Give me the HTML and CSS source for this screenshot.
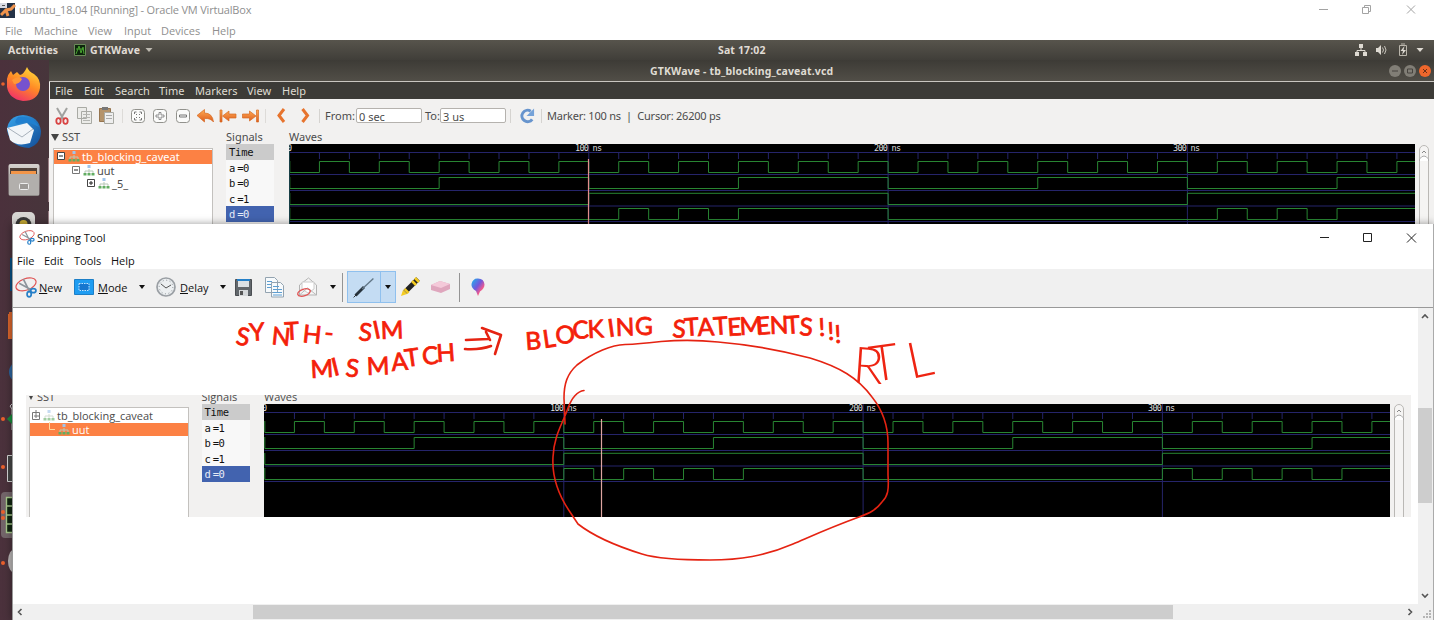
FILE: index.html
```html
<!DOCTYPE html>
<html lang="en">
<head>
<meta charset="utf-8">
<title>ubuntu_18.04 [Running] - Oracle VM VirtualBox</title>
<link rel="stylesheet" href="styles.css">
</head>
<body>
<svg class="defs" width="0" height="0">
  <defs>
    <linearGradient id="org" x1="0" y1="0" x2="0" y2="1"><stop offset="0" stop-color="#ffad55"/><stop offset="1" stop-color="#dd5a1c"/></linearGradient>
    <linearGradient id="fox" x1=".8" y1="0" x2=".3" y2="1"><stop offset="0" stop-color="#ffdd3c"/><stop offset=".5" stop-color="#ff8a25"/><stop offset="1" stop-color="#f0306a"/></linearGradient>
    <linearGradient id="bird" x1="0" y1="0" x2="1" y2="1"><stop offset="0" stop-color="#38a5ec"/><stop offset="1" stop-color="#124c96"/></linearGradient>
    <linearGradient id="drawer" x1="0" y1="0" x2="0" y2="1"><stop offset="0" stop-color="#d6d3cf"/><stop offset="1" stop-color="#8d8a87"/></linearGradient>
    <linearGradient id="pin" x1="0" y1="0" x2="1" y2="1"><stop offset="0" stop-color="#17b9ef"/><stop offset=".45" stop-color="#7357dc"/><stop offset=".7" stop-color="#ef5a8e"/><stop offset="1" stop-color="#ff9b35"/></linearGradient>
    <g id="grid" fill="none" stroke="#25246a">
      <path d="M0 8.500H38M0 30.500H38M0 46.500H38M0 62H38M0 77.500H38" vector-effect="non-scaling-stroke"/>
      <path d="M1 9v6M2 9v6M3 9v6M4 9v6M5 9v6M6 9v6M7 9v6M8 9v6M9 9v6M11 9v6M12 9v6M13 9v6M14 9v6M15 9v6M16 9v6M17 9v6M18 9v6M19 9v6M21 9v6M22 9v6M23 9v6M24 9v6M25 9v6M26 9v6M27 9v6M28 9v6M29 9v6M31 9v6M32 9v6M33 9v6M34 9v6M35 9v6M36 9v6M37 9v6M10 0V113M20 0V113M30 0V113" vector-effect="non-scaling-stroke"/>
    </g>
    <g id="abc" fill="none" stroke="#288532">
      <path d="M.01 17V28.500H1V17.500H2V28.500H3V17.500H4V28.500H5V17.500H6V28.500H7V17.500H8V28.500H9V17.500H10V28.500H11V17.500H12V28.500H13V17.500H14V28.500H15V17.500H16V28.500H17V17.500H18V28.500H19V17.500H20V28.500H21V17.500H22V28.500H23V17.500H24V28.500H25V17.500H26V28.500H27V17.500H28V28.500H29V17.500H30V28.500H31V17.500H32V28.500H33V17.500H34V28.500H35V17.500H36V28.500H37V17.500H38" vector-effect="non-scaling-stroke"/>
      <path d="M.01 33V44.500H5V33.500H10V44.500H15V33.500H20V44.500H25V33.500H30V44.500H35V33.500H38" vector-effect="non-scaling-stroke"/>
      <path d="M.01 49V60.500H10V49.300H20V60.500H30V49.300H38" vector-effect="non-scaling-stroke"/>
    </g>
    <symbol id="tree" viewBox="0 0 12 11"><path d="M6 4v2M2 8V6h8v2M6 6v2" fill="none" stroke="#b7c8b7"/><rect x="4.500" y="0" width="3" height="3" fill="#9fc4ea"/><path d="M.5 8h3v2.500h-3zM4.500 8h3v2.500h-3zM8.500 8h3v2.500h-3z" fill="#62ad62"/></symbol>
    <symbol id="snip" viewBox="0 0 21 20"><ellipse cx="10.500" cy="7" rx="10" ry="5.500" transform="rotate(-20 10.500 7)" fill="none" stroke="#e05252" stroke-width="1.100"/><path d="M4 6l11 6M8 2l6 12" stroke="#8c949b" stroke-width="1.600"/><ellipse cx="13.500" cy="16.500" rx="2" ry="2.500" fill="none" stroke="#257fc8" stroke-width="1.600"/><ellipse cx="17.500" cy="13" rx="2.500" ry="1.900" fill="none" stroke="#257fc8" stroke-width="1.600"/></symbol>
  </defs>
</svg>

<main class="desktop">
  <section class="vm">
    <header class="vm-title">
      <svg width="16" height="17" viewBox="0 0 16 17"><path d="M0 1h15v15H0z" fill="#243247"/><path d="M1 13l5-5 5-1 4-4M6 8l2 6" stroke="#f0944d" stroke-width="3" fill="none"/><path d="M0 1h7v5H0z" fill="#d8dbe4"/><path d="M2 3.500h3" stroke="#555"/></svg>
      <span class="vm-name">ubuntu_18.04 [Running] - Oracle VM VirtualBox</span>
      <svg class="winbtns" width="110" height="20" viewBox="0 0 110 20" fill="none" stroke="#a3a3a3"><path d="M9 9.500h9M52.500 7.500h6v6h-6zM54.500 7v-1.500h6v6H59M97 5.500l8 8M105 5.500l-8 8"/></svg>
    </header>
    <nav class="vm-menu"><span>File</span><span>Machine</span><span>View</span><span>Input</span><span>Devices</span><span>Help</span></nav>
    <div class="gnome">
      <b class="activities">Activities</b>
      <svg width="12" height="12" viewBox="0 0 12 12"><path d="M.5.5h11v11H.5z" fill="#0e260d" stroke="#6a8b58"/><path d="M2 10L5 2l2 7 2-6 1 7M2 5h8" stroke="#48a32f" fill="none"/></svg>
      <b class="appname">GTKWave</b>
      <svg width="8" height="5"><path d="M.5 0h7L4 4z" fill="#bdb9b0"/></svg>
      <b class="clock">Sat 17:02</b>
      <svg class="tray" width="74" height="14" viewBox="0 0 74 14" fill="#dedad2"><path d="M5 1h4v4H5zM1 9h4v4H1zM9 9h4v4H9z"/><path d="M7 5v2.500M3 9V7.500h8V9" fill="none" stroke="#dedad2"/><path d="M22 5h2l3-3v10l-3-3h-2z"/><path d="M28.500 4.500q2 2.500 0 5M30.500 3q3 4 0 8" fill="none" stroke="#c9c5bd"/><path d="M45.500 2.500h7v10h-7zM47 1h4" fill="none" stroke="#bab6ac"/><path d="M50.500 3l-4 5h2.500l-1 4 4-5h-2.500z"/><path d="M62.500 5h7L66 9z"/></svg>
    </div>
    <div class="guest">
      <aside class="dock">
        <svg width="49" height="560" viewBox="0 60 49 560">
          <circle cx="3" cy="84" r="1.800" fill="#e9602c"/>
          <path d="M7 79q1-5 4-8l2 4 4-3 3 3q4-1 7-8 2 5 7 7 7 5 6 14-2 13-17 13Q9 99 7 87z" fill="url(#fox)"/>
          <circle cx="23" cy="84" r="7" fill="#7652cf"/><path d="M12 80q6-5 10-1-2 5-8 5z" fill="#ff9837"/>
          <path d="M7 130Q8 116 23 115q16 1 18 16 0 13-12 17Q10 147 7 130z" fill="url(#bird)"/><path d="M7 128l20-5 7 7-4 13q-13 4-20-3z" fill="#f2f5f8"/><path d="M8 128l14 9 11-8" stroke="#a8b1bb" fill="none"/><path d="M18 117q15-2 21 10-8-4-12-5l-10 2q-4-2 1-7z" fill="#2080d0"/>
          <rect x="8.500" y="164" width="31" height="32" rx="2" fill="url(#drawer)"/><path d="M10 168h27v8H10z" fill="#50423a"/><path d="M11 171h25v3H11z" fill="#f29548"/><path d="M9 174h30v21H9z" fill="#b2afac"/><rect x="19.500" y="183.500" width="9" height="6" rx="1" fill="#9c9996" stroke="#eee"/>
          <path d="M48.500 158v44M48.500 211v13" stroke="#9a8086"/>
          <rect x="12" y="212" width="23" height="28" rx="5" fill="#d7d6d3"/><circle cx="23.500" cy="225" r="8" fill="#393939"/><circle cx="23.500" cy="224" r="4" fill="#c9ad36"/>
          <path d="M10 258h8v33h-8z" fill="#075083"/><path d="M8 314h8v25H8zM9 312h3v2H9z" fill="#d9652c"/><circle cx="20" cy="372" r="11" fill="#2c659f"/>
          <path d="M12 404l-2 2 2 3v21" stroke="#ccc" fill="none"/><path d="M7 419l6-6v12z" fill="#168d3b"/>
          <path d="M7.500 455.500h8v26h-8z" fill="#444" stroke="#d3d3d3"/>
          <rect x="1" y="492" width="20" height="46" rx="4" fill="#73656a"/><path d="M6.500 497.500h8v35h-8zM7 506h6M7 515h6M7 524h6" fill="#112511" stroke="#a7c98b" stroke-width="1.400"/>
          <ellipse cx="15" cy="561" rx="7" ry="12" fill="#bbb7b7"/>
          <g fill="#e9602c"><circle cx="3" cy="419" r="2"/><circle cx="3" cy="467" r="2"/><circle cx="3" cy="512" r="2"/><circle cx="3" cy="518" r="2"/><circle cx="3" cy="563" r="2"/></g>
        </svg>
      </aside>
      <div class="gtk">
        <div class="gtk-title"><b>GTKWave - tb_blocking_caveat.vcd</b>
          <svg class="gtkbtns" width="46" height="14" viewBox="0 0 46 14"><circle cx="7" cy="7" r="6" fill="#817e76"/><path d="M4 7h6" stroke="#46433e"/><circle cx="22" cy="7" r="6" fill="#817e76"/><path d="M19.500 5h5v4h-5z" fill="none" stroke="#46433e"/><circle cx="37" cy="7" r="6" fill="#ef672c"/><path d="M35 5l4 4M39 5l-4 4" stroke="#6b2f18"/></svg>
        </div>
        <nav class="gtk-menu"><span>File</span><span>Edit</span><span>Search</span><span>Time</span><span>Markers</span><span>View</span><span>Help</span></nav>
        <div class="gtk-tools">
          <svg width="270" height="22" viewBox="49 105 270 22">
            <path d="M57 108l7 12M67 108l-7 12" stroke="#a0a19f" stroke-width="2"/><ellipse cx="58.500" cy="121" rx="2.200" ry="2.800" fill="none" stroke="#d84343" stroke-width="1.800"/><ellipse cx="65.500" cy="121" rx="2.200" ry="2.800" fill="none" stroke="#d84343" stroke-width="1.800"/>
            <path d="M77.500 107.500h9v11h-9zM81.500 111.500h10v12h-10z" fill="#ecece9" stroke="#a9aaa4"/><path d="M83 114.500h7M83 117.500h7M83 120.500h7" stroke="#b5b6b2"/>
            <path d="M99.500 108.500h11v13h-11z" fill="#b4936b" stroke="#96754f"/><path d="M102 107h6v3h-6z" fill="#777"/><path d="M104.500 112.500h9v11h-9z" fill="#eee" stroke="#a9aaa4"/><path d="M106 115.500h6M106 118.500h6" stroke="#aaa"/>
            <path d="M122.500 109v14M265.500 109v14" stroke="#dddbd8"/>
            <g fill="#fbfbfa" stroke="#92928d"><rect x="131.500" y="109.500" width="13" height="13" rx="3"/><rect x="153.500" y="109.500" width="13" height="13" rx="3"/><rect x="176.500" y="109.500" width="13" height="13" rx="3"/></g>
            <path d="M134.500 114v-2h2M141.500 114v-2h-2M134.500 118v2h2M141.500 118v2h-2M136 114l1 1M140 114l-1 1M136 118l1-1M140 118l-1-1" fill="none" stroke="#777"/><path d="M159 112.500h2v2.500h3v2h-3v2.500h-2V117h-3v-2h3z" fill="none" stroke="#777" stroke-width=".8"/><path d="M179.500 115h7v2h-7z" fill="none" stroke="#777"/>
            <g fill="url(#org)" stroke="#d66a24" stroke-width=".7"><path d="M197 115.500l7.500-6v3.500q8 0 9 9-3-4-9-3.500v3.500z"/><path d="M220 110h2v12h-2zM222.500 116l6.500-5v3h7v4h-7v3z"/><path d="M256.500 110h2v12h-2zM256 116l-6.500-5v3h-7v4h7v3z"/></g>
            <path d="M284 109l-5 6.500 5 6.500M302.500 109l5 6.500-5 6.500" fill="none" stroke="#e7742e" stroke-width="3"/>
          </svg>
          <span class="sep s1"></span>
          <label>From:</label><span class="field">0 sec</span><label class="to">To:</label><span class="field">3 us</span>
          <span class="sep s2"></span>
          <svg class="reload" width="16" height="18" viewBox="0 0 17 18"><path d="M14 12.500A6 6 0 1 1 12.500 4" fill="none" stroke="#6794cd" stroke-width="3.200"/><path d="M16 1v8H8z" fill="#75a2d8"/></svg>
          <span class="sep"></span>
          <span class="marker">Marker: 100 ns&nbsp; |&nbsp; Cursor: 26200 ps</span>
        </div>
        <div class="panes">
          <div class="sst"><div class="pane-label"><i class="tri"></i>SST</div>
            <div class="treebox">
              <div class="node sel"><svg width="9" height="9"><path d="M.5.500h7v7h-7z" fill="#fff" stroke="#444"/><path d="M2 4h4" stroke="#222"/></svg><svg width="12" height="11"><use href="#tree"/></svg><span>tb_blocking_caveat</span></div>
              <div class="node n2"><svg width="9" height="9"><path d="M.5.500h7v7h-7z" fill="#fff" stroke="#777"/><path d="M2 4h4" stroke="#222"/></svg><svg width="12" height="11"><use href="#tree"/></svg><span>uut</span></div>
              <div class="node n3"><svg width="9" height="9"><path d="M.5.500h7v7h-7z" fill="#fff" stroke="#444"/><path d="M2 4h4M4 2v4" stroke="#222"/></svg><svg width="12" height="11"><use href="#tree"/></svg><span>_5_</span></div>
            </div>
          </div>
          <div class="signals"><div class="pane-label">Signals</div>
            <div class="sigs"><span class="time">Time</span><span>a =0</span><span>b =0</span><span>c =1</span><span class="on">d =0</span></div>
          </div>
          <div class="waves"><div class="pane-label">Waves</div>
            <svg class="scope" width="1126" height="113">
              <g transform="translate(.5 0) scale(29.93 1)"><use href="#grid"/><use href="#abc"/><path d="M.01 64V75.500H11V64.500H12V75.500H13V64.500H14V75.500H15V64.500H20V75.500H31V64.500H32V75.500H33V64.500H34V75.500H35V64.500H38" class="trace"/></g>
              <path d="M.5 0v113" stroke="#173e45"/><path d="M299.500 15v98" stroke="#e38d8b" stroke-width="1.200"/>
              <text x="-2" y="7">0</text><text x="286" y="7" textLength="27">100 ns</text><text x="585" y="7" textLength="27">200 ns</text><text x="884" y="7" textLength="27">300 ns</text>
            </svg>
          </div>
          <svg class="gscroll" width="14" height="130" viewBox="0 0 14 130"><rect x="4.500" y=".5" width="9" height="140" rx="4.500" fill="#f5f4f3" stroke="#bab8b5"/><path d="M4.500 16v-2q4.500-6 9 0v2" fill="#fff" stroke="#aaa"/><path d="M7 8l2-2 2 2" fill="none" stroke="#888"/></svg>
        </div>
      </div>
    </div>
  </section>

  <section class="snipping">
    <header class="s-title"><svg width="16" height="15"><use href="#snip"/></svg><span>Snipping Tool</span>
      <svg class="winbtns" width="110" height="25" viewBox="0 0 110 25" fill="none" stroke="#222"><path d="M10 13.500h9M53.500 9.500h8v8h-8zM97 9.500l9 9M106 9.500l-9 9"/></svg>
    </header>
    <nav class="s-menu"><span>File</span><span>Edit</span><span>Tools</span><span>Help</span></nav>
    <div class="s-tools">
      <svg width="22" height="21"><use href="#snip"/></svg><span><u>N</u>ew</span>
      <svg width="20" height="16"><path d="M.5.500h19v15H.5z" fill="#1f9df2" stroke="#1c7fc7"/><path d="M5 4.500h10v7H5z" fill="#1677cf" stroke="#bfe4ff" stroke-dasharray="1.500 1"/></svg><span><u>M</u>ode</span>
      <i class="caret"></i>
      <svg width="20" height="20" viewBox="0 0 20 20"><circle cx="10" cy="10" r="9" fill="#eceff1" stroke="#9a9fa4" stroke-width="1.700"/><circle cx="10" cy="10" r="6.800" fill="none" stroke="#868d92" stroke-dasharray="1 2.560"/><path d="M5 7l5 4 5-3" fill="none" stroke="#555"/></svg><span><u>D</u>elay</span>
      <i class="caret"></i>
      <svg width="18" height="17"><path d="M.5.500h16v16h-16z" fill="#62676c" stroke="#4a4e52"/><path d="M3 0h11v8H3z" fill="#dce1e5"/><path d="M2 0h13v2H2z" fill="#2580c8"/><path d="M4 11h9v6H4z" fill="#d5d8da"/><path d="M5 12h3v4H5z" fill="#555"/></svg>
      <svg width="20" height="21" viewBox="0 0 20 21"><path d="M.5.500h9l3 3v12H.5zM6.500 5.500h9l3 3v11.500h-12z" fill="#f7fafc" stroke="#93a3b0"/><path d="M2 4.500h5M2 7.500h4M2 10.500h4M8 9.500h6M8 12.500h9M8 15.500h9M8 18h9" stroke="#5d9ed2"/></svg>
      <svg width="22" height="20" viewBox="0 0 22 20"><path d="M2.500 8l9-7 8 7v10h-17z" fill="#f5f5f5" stroke="#b3b3b3"/><path d="M5 5h12v7l-6 4-6-4z" fill="#fff" stroke="#ccc"/><path d="M2.500 18l8-7 9 7" fill="none" stroke="#bbb"/><ellipse cx="7" cy="15.500" rx="6.500" ry="3.400" transform="rotate(-18 7 15.500)" fill="none" stroke="#e05555" stroke-width="1.300"/></svg>
      <i class="caret"></i><i class="rule"></i>
      <div class="pen"><svg width="33" height="31" viewBox="0 0 34 31"><path d="M8 24l9-9" stroke="#27333d" stroke-width="3"/><path d="M15 17L27 6" stroke="#627787" stroke-width="1.500"/><path d="M6 26l3-3" stroke="#222"/></svg><i class="caret"></i></div>
      <svg width="20" height="20" viewBox="0 0 20 20"><path d="M5 15L18 2" stroke="#222" stroke-width="5"/><path d="M1 19l2-6 4 4z" fill="#f5cc22"/><path d="M4.500 12l4 4M12 4l4 4M15 1l4 4" stroke="#f2c920" stroke-width="2.500"/></svg>
      <svg width="21" height="14" viewBox="0 0 21 14"><path d="M1 5l9-4 10 3v5l-9 4-10-3z" fill="#dfa6bd"/><path d="M1 5l9-4 10 3-9 4z" fill="#f4c9d9"/></svg>
      <i class="rule"></i>
      <svg width="14" height="19" viewBox="0 0 14 19"><path d="M7 18l-2-5Q0 10 .5 6 2 0 7 .500q6 0 6.500 6 0 4-4.500 7z" fill="url(#pin)"/></svg>
    </div>
    <div class="s-body">
      <div class="canvas">
        <div class="capture">
          <div class="sst"><div class="pane-label"><i class="tri"></i>SST</div>
            <div class="treebox">
              <div class="node"><svg width="9" height="11"><path d="M.5 2.500h7v7h-7z" fill="#fff" stroke="#777"/><path d="M2 6h6M4 0v8" stroke="#777"/></svg><svg width="12" height="11" opacity=".6"><use href="#tree"/></svg><span>tb_blocking_caveat</span></div>
              <div class="node sel n2"><svg width="9" height="14"><path d="M2.500 0v7.500H8" fill="none" stroke="#ffd9a0"/></svg><svg width="12" height="11"><use href="#tree"/></svg><span>uut</span></div>
            </div>
          </div>
          <div class="signals"><div class="pane-label">Signals</div>
            <div class="sigs"><span class="time">Time</span><span>a =1</span><span>b =0</span><span>c =1</span><span class="on">d =0</span></div>
          </div>
          <div class="waves"><div class="pane-label">Waves</div>
            <svg class="scope" width="1126" height="113">
              <g transform="translate(.5 0) scale(29.93 1)"><use href="#grid"/><use href="#abc"/><path d="M.01 64V75.500H10V64.500H11V75.500H12V64.500H13V75.500H14V64.500H15V75.500H16V64.500H20V75.500H30V64.500H31V75.500H32V64.500H33V75.500H34V64.500H35V75.500H36V64.500H38" class="trace"/></g>
              <path d="M337.500 15v98" stroke="#dda5a0" stroke-width="1.200"/>
              <text x="-2" y="7">0</text><text x="286" y="7" textLength="27">100 ns</text><text x="585" y="7" textLength="27">200 ns</text><text x="884" y="7" textLength="27">300 ns</text>
            </svg>
          </div>
          <svg class="gscroll" width="14" height="120" viewBox="0 0 14 120"><rect x="4.500" y=".5" width="9" height="140" rx="4.500" fill="#f5f4f3" stroke="#bab8b5"/><path d="M4.500 16v-2q4.500-6 9 0v2" fill="#fff" stroke="#aaa"/><path d="M7 8l2-2 2 2" fill="none" stroke="#888"/></svg>
        </div>
        <svg class="ink" width="1405" height="296" viewBox="13 308 1405 296">
          <g class="note">
            <text x="235 250 271 285 302 324" y="344 341 344 340 342 341" rotate="10 -4 6 -3 6 4">SYNTH-</text>
            <text x="358 375 381" y="340 339 339" rotate="6 -12 -2">SIM</text>
            <text x="311 334 345 367 392 406 423 437" y="378 376 376 375 371 367 365 362" rotate="-3 -14 6 -2 -5 -8 -6 -4">MISMATCH</text>
            <text x="526 544 556 573 588 609 616 635" y="350 348 344 339 338 337 336 335" rotate="-4 -8 -4 -4 -3 -8 -2 0">BLOCKING</text>
            <text x="672 685 698 714 728 740 757 770 786 799" y="337 336 336 335 336 335 335 334 334 335" rotate="4 -4 -3 -4 -4 -3 -5 -2 -4 4">STATEMENTS</text>
            <text x="819 828 835" y="336 340 343" rotate="-3 -3 -3">!!!</text>
          </g>
          <g class="rtl"><text x="852 872 911" y="382 382 379" rotate="4 -8 -12">RTL</text></g>
          <g class="stroke">
            <path d="M466 340l22-1M465 349q15 1 26-3M482 328l19 7-6 19M486 332l4 8" stroke-width="2.600"/>
            <path d="M565 424L564 398C564 384 567 374 577 365C594 352 612 345 625 344.500C640 344 648 343 661 341.500Q690 339 718 342Q765 346 810 358C840 367 858 378 872 397C884 412 888 428 888 443V475C889 490 888 496 882 502C876 510 870 513 859 517C829 528 814 535 793 544C765 556 740 560 710 560C675 560 655 558 642 554C613 545 592 535 578 524L570 512C557 493 552 474 553 457C554 435 563 423 568 408Q574 392 584 390.500" stroke-width="1.600"/>
          </g>
        </svg>
      </div>
      <div class="vbar"><svg width="14" height="296" viewBox="0 0 14 296"><path d="M0 100h14v95H0z" fill="#cdcdcd"/><path d="M4 10l3-3 3 3M4 286l3 3 3-3" fill="none" stroke="#555" stroke-width="1.600"/></svg></div>
    </div>
    <div class="hbar"><svg width="1421" height="16" viewBox="13 604 1421 16"><path d="M253 605h920v14H253z" fill="#cdcdcd"/><path d="M21.500 609l-3 3 3 3M1408.500 609l3 3-3 3" fill="none" stroke="#555" stroke-width="1.600"/><path d="M1429 610h2v2h-2zM1429 613h2v2h-2zM1426 613h2v2h-2zM1429 616h2v2h-2zM1426 616h2v2h-2zM1423 616h2v2h-2z" fill="#b5b5b5"/></svg></div>
  </section>
</main>
</body>
</html>
```
FILE: styles.css
```css
* { box-sizing: border-box; }
body { margin: 0; font-family: "Noto Sans", "Open Sans", sans-serif; font-size: 11px; overflow: hidden; }
svg { display: block; flex: none; }
.defs { position: absolute; }
span, b, label { white-space: nowrap; }
.desktop { position: relative; width: 1434px; height: 620px; overflow: hidden; background: #49343b; }

/* virtual machine window */
.vm { display: flex; flex-direction: column; height: 620px; }
.vm-title { display: flex; align-items: center; height: 20px; background: #fff; color: #8f8f8f; }
.vm-name { margin-left: 3px; margin-top: -2px; font-family: "Open Sans", sans-serif; letter-spacing: -.19px; }
.winbtns { margin-left: auto; margin-right: 14px; }
.vm-menu { display: grid; grid-template-columns: 29px 54px 36px 37px 51px 40px; padding-left: 5px; height: 20px; line-height: 22px; background: #fff; color: #8f8f8f; font-family: "Open Sans", sans-serif; }
.gnome { display: flex; align-items: center; height: 20px; padding-left: 8px; background: linear-gradient(#57544c, #403e39); color: #e0dcd5; font-size: 10.5px; letter-spacing: .15px; }
.activities { width: 66px; }
.appname { width: 55px; margin-left: 4px; }
.clock { margin-left: 565px; }
.tray { margin-left: auto; margin-right: 6px; }
.guest { display: flex; height: 560px; }
.dock { width: 49px; background: linear-gradient(90deg, #4b313c, #47353b); }
.gtk { width: 1385px; padding-left: 1px; background: #f2f1f0; }
.gtk-title { display: flex; align-items: center; height: 22px; margin-left: -1px; padding-left: 601px; background: linear-gradient(#3d3b36, #514e47); border-bottom: 1px solid #c9c6c1; color: #dfdbd2; font-size: 10.5px; letter-spacing: .15px; }
.gtkbtns { margin-left: auto; }
.gtk-menu { display: grid; grid-template-columns: 29px 31px 44px 36px 52px 35px 40px; height: 17px; padding-left: 5px; line-height: 18px; background: #3c3b37; color: #dfdbd2; }
.gtk-tools { display: flex; align-items: center; height: 33px; margin-left: -1px; color: #4b4b4b; }
.sep { width: 1px; height: 14px; background: #d5d3d0; }
.gtk-tools label { width: 31px; margin-left: 5px; }
.gtk-tools .to { width: 15px; margin-left: 3px; }
.gtk-tools .s1 { margin-left: 0; }
.field { width: 66px; height: 15px; border: 1px solid #b5b2ae; border-radius: 2px; background: #fff; line-height: 15px; padding-left: 2px; }
.gtk-tools .s2 { margin-left: 4px; }
.reload { margin: 0 6px 0 8px; }
.marker { margin-left: 5px; letter-spacing: -.22px; }
.panes { display: flex; height: 428px; }
.sst { width: 176px; padding-left: 3px; }
.pane-label { height: 12px; line-height: 10px; color: #4b4b4b; }
.sst .pane-label { height: 16px; margin-left: -2px; }
.tri { display: inline-block; border: 4px solid transparent; border-top: 7px solid #444; border-bottom: 0; margin-right: 3px; }
.treebox { width: 160px; height: 300px; border: 1px solid #c3c1be; background: #fff; color: #4b4b4b; padding-top: 1px; }
.node { display: flex; align-items: center; height: 13.500px; padding-left: 3px; gap: 2px; }
.node.sel { background: #fc8144; color: #fff; }
.n2 { padding-left: 18px; }
.n3 { padding-left: 33px; }
.signals { width: 63px; }
.sigs { display: flex; flex-direction: column; width: 48px; font-family: "DejaVu Sans Mono", monospace; font-size: 10.5px; letter-spacing: -.5px; word-spacing: -3.500px; color: #111; background: #f8f8f8; }
.sigs span { height: 15.600px; line-height: 16.500px; padding-left: 3px; }
.sigs .time { background: #cbcbcb; letter-spacing: -.2px; line-height: 17.500px; }
.sigs .on { background: #4263af; color: #e7ecf7; }
.scope { background: #000; overflow: hidden; }
.scope text { font: 8.500px "DejaVu Sans Mono", monospace; fill: #ddd; }
.trace { fill: none; stroke: #288532; vector-effect: non-scaling-stroke; }
.gscroll { margin-top: 13px; }

/* snipping window */
.snipping { position: absolute; left: 12px; top: 224px; width: 1422px; height: 396px; background: #fff; border-left: 1px solid #9a9a9a; border-right: 1px solid #aaa; color: #111; font-family: "Open Sans", sans-serif; box-shadow: 0 0 8px #0006; }
.s-title { display: flex; align-items: center; height: 25px; padding-left: 6px; padding-top: 2px; gap: 2px; }
.s-title span { margin-top: -1px; letter-spacing: -.08px; }
.s-title .winbtns { margin-right: 13px; margin-top: -2px; }
.s-menu { display: grid; grid-template-columns: 27px 30px 37px 30px; padding-left: 4px; height: 20px; line-height: 24px; }
.s-tools { display: grid; grid-template-columns: 24px 35px 24px 41px 17px 24px 40px 15px 30px 32px 33px 12px 5px 53px 30px 29px 12px 20px; align-items: center; padding-left: 2px; padding-bottom: 2px; height: 38px; background: #f0f0f0; }
.s-tools u { text-underline-offset: 1px; }
.caret { width: 0; border: 3.500px solid transparent; border-top: 4px solid #111; border-bottom: 0; }
.rule { width: 1px; height: 29px; background: #949494; }
.pen { display: flex; align-items: center; width: 49px; height: 32px; background: #c4dcf3; border: 1px solid #8fc0ee; }
.pen svg { border-right: 1px solid #8fc0ee; }
.pen .caret { margin-left: 4px; }
.s-body { display: flex; height: 297px; margin-top: 0; border-top: 1px solid #999; }
.canvas { position: relative; width: 1405px; height: 296px; overflow: hidden; padding: 87px 0 0 13px; }
.vbar { width: 15px; background: #f0f0f0; }
.capture { display: flex; width: 1385px; height: 122px; overflow: hidden; background: #f2f1f0; }
.capture .pane-label { height: 9px; line-height: 3px; }
.capture .sst .pane-label { height: 12px; margin-left: 0; }
.capture .tri { border-width: 4px 2.500px 0; margin: 0 4px 0 0; vertical-align: 1px; }
.capture .sst { width: 175.500px; padding-left: 3px; }
.capture .node { padding-left: 2px; }
.capture .n2 { padding-left: 17px; }
.capture .signals { width: 62.500px; }
.capture .gscroll { margin-top: 9px; }
.ink { position: absolute; left: 0; top: 0; }
.note { font: 24.500px Lato, sans-serif; fill: #f41f0a; stroke: #f41f0a; stroke-width: .8; }
.rtl { font: 300 50px Lato, sans-serif; fill: #ee2412; }
.stroke { fill: none; stroke: #e52312; stroke-linecap: round; stroke-linejoin: round; }
.hbar { height: 16px; background: #f0f0f0; }
```
